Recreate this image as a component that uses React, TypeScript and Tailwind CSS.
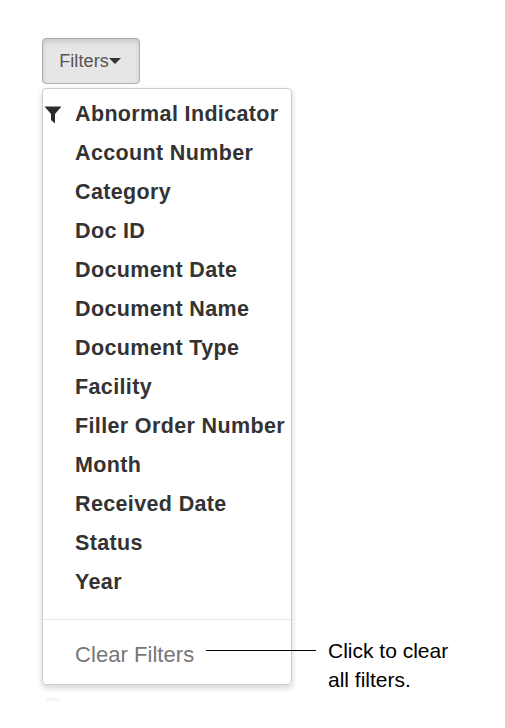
const items = [
  'Abnormal Indicator',
  'Account Number',
  'Category',
  'Doc ID',
  'Document Date',
  'Document Name',
  'Document Type',
  'Facility',
  'Filler Order Number',
  'Month',
  'Received Date',
  'Status',
  'Year',
]

function FunnelIcon() {
  return (
    <svg width="18" height="18" viewBox="0 0 18 18" className="absolute left-[1px] top-[11px]">
      <path d="M0.500 0.500h17L11 8v9.500L7 14V8z" fill="#2b2b2b" />
    </svg>
  )
}

export default function App() {
  return (
    <div className="min-h-[728px] bg-white pl-[42px] pt-[38px] font-['Liberation_Sans',Arial,sans-serif]">
      <button className="flex h-[46px] w-[98px] items-center justify-center rounded border border-[#adadad] bg-[#e6e6e6] pr-[2px] text-[18px] tracking-[0.1px] text-[#555] shadow-[inset_0_3px_5px_rgba(0,0,0,0.125)]">
        Filters
        <span className="border-x-[6px] border-t-[6px] border-x-transparent border-t-[#333]" />
      </button>
      <div className="mt-[4px] w-[250px] rounded border border-[#ccc] pt-[6px] shadow-[0_3px_6px_rgba(0,0,0,0.175)]">
        {items.map((item, i) => (
          <div key={item} className="relative h-[39px] whitespace-nowrap pl-[32px] text-[21.500px] font-bold leading-[39px] tracking-[0.36px] text-[#333]">
            {i === 0 && <FunnelIcon />}
            {item}
          </div>
        ))}
        <div className="mt-[17px] border-t border-[#e5e5e5]" />
        <div className="flex h-[64px] items-start pl-[32px]">
          <span className="w-[120px] shrink-0 whitespace-nowrap pt-[20px] text-[22px] leading-[30px] tracking-[0.05px] text-[#777]">Clear Filters</span>
          <span className="ml-[11px] mt-[30px] h-px w-[110px] shrink-0 bg-black" />
          <span className="ml-[12px] w-[140px] shrink-0 pt-[16px] text-[21px] leading-[29px] text-black">
            Click to clear all filters.
          </span>
        </div>
      </div>
      <div className="ml-[4px] mt-[13px] h-[3px] w-[14px] bg-[#f6f6f6]" />
    </div>
  )
}
